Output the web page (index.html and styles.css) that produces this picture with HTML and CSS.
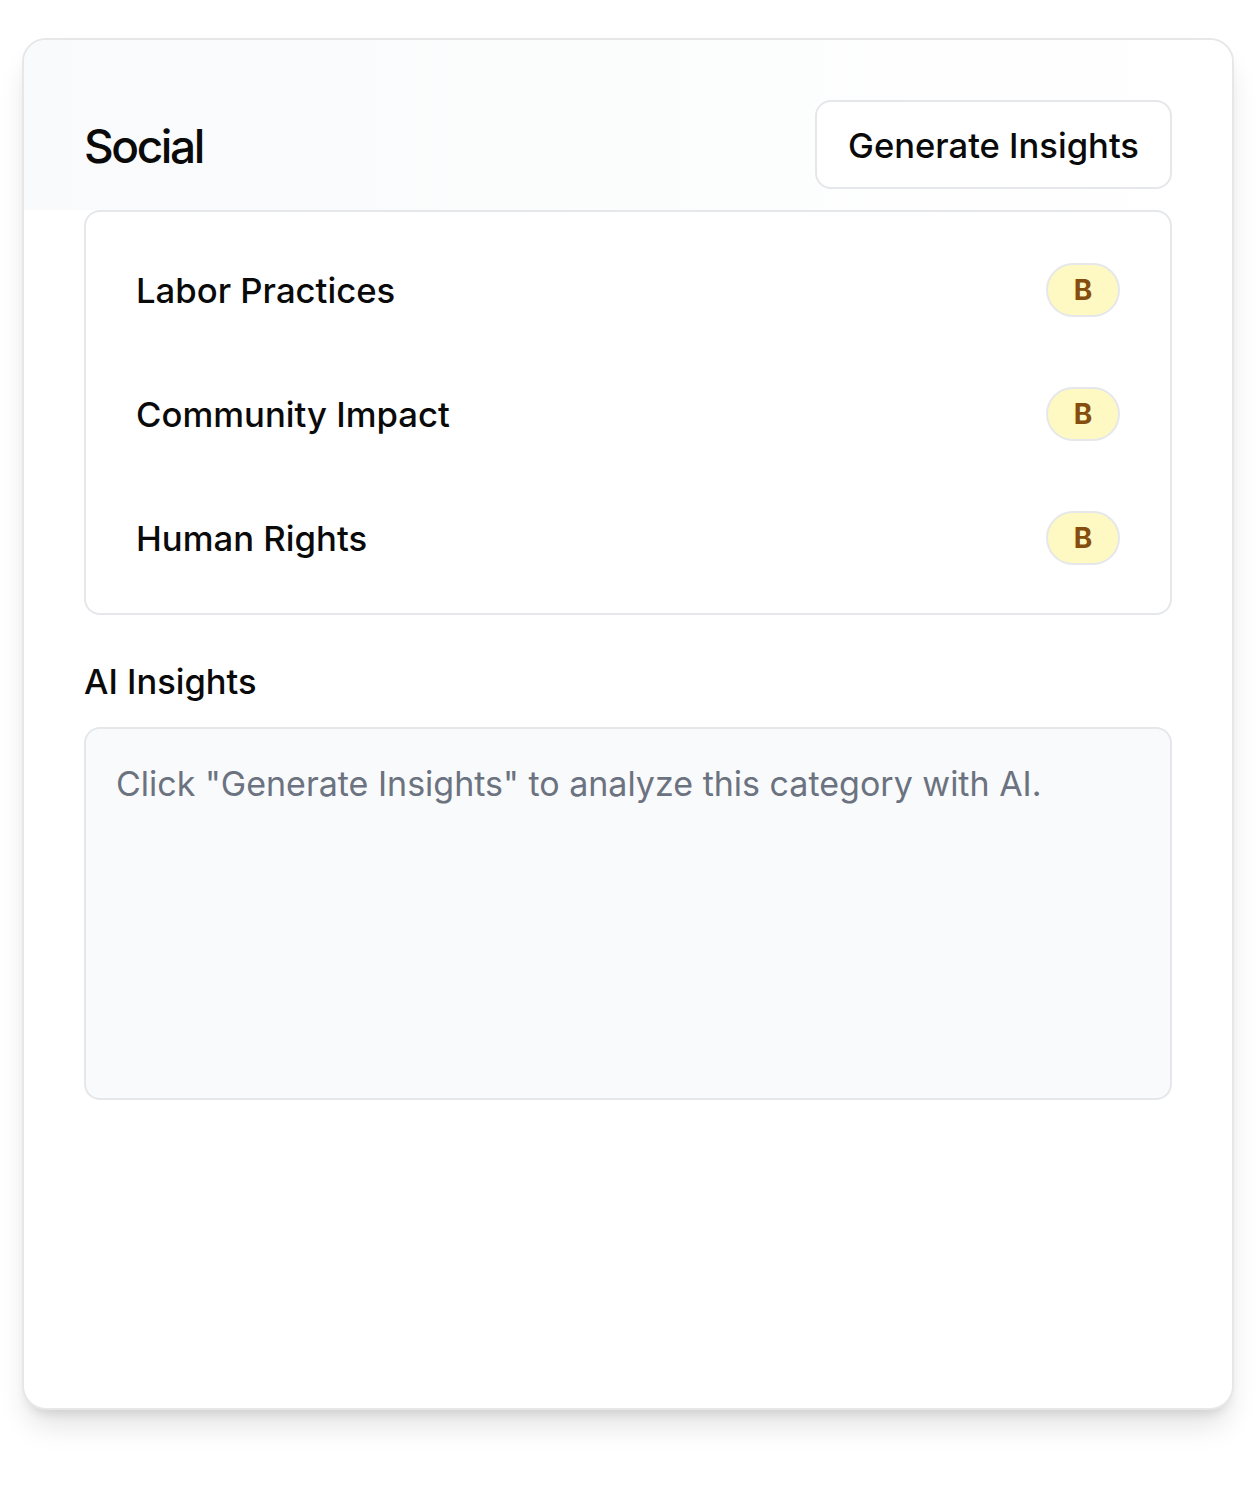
FILE: index.html
```html
<!DOCTYPE html>
<html lang="en">
<head>
<meta charset="utf-8">
<title>Social</title>
<link rel="stylesheet" href="styles.css">
</head>
<body>
<div class="card">
  <div class="card-header">
    <h2 class="card-title">Social</h2>
    <button class="btn">Generate Insights</button>
  </div>
  <div class="metrics">
    <div class="metric-row"><span class="metric-name">Labor Practices</span><span class="badge">B</span></div>
    <div class="metric-row"><span class="metric-name">Community Impact</span><span class="badge">B</span></div>
    <div class="metric-row"><span class="metric-name">Human Rights</span><span class="badge">B</span></div>
  </div>
  <div class="insights">
    <h3 class="insights-title">AI Insights</h3>
    <div class="insights-box">
      <p class="insights-text">Click "Generate Insights" to analyze this category with AI.</p>
    </div>
  </div>
</div>
</body>
</html>
```
FILE: styles.css
```css
* { box-sizing: border-box; }
html, body { margin: 0; padding: 0; background: #ffffff; }
body {
  font-family: Inter, "Noto Sans", "Liberation Sans", sans-serif;
  color: #0a0a0a;
  padding: 38px 26px 0 22px;
  min-height: 1494px;
}
.card {
  width: 1212px;
  height: 1372px;
  border: 2px solid #e7e7e7;
  border-radius: 24px;
  background: #ffffff;
  box-shadow: 0 20px 30px -6px rgba(0,0,0,0.12), 0 8px 12px -6px rgba(0,0,0,0.12);
  overflow: hidden;
}
.card-header {
  height: 170px;
  padding: 60px 60px 21px;
  display: flex;
  align-items: center;
  justify-content: space-between;
  background: linear-gradient(to right, #f9fafb, #ffffff);
}
.card-title {
  margin: 0;
  font-size: 46px;
  font-weight: 500;
  letter-spacing: -2.4px;
  line-height: 1;
  padding-top: 2px;
}
.btn {
  height: 89px;
  padding: 0 31px;
  border: 2px solid #e5e7eb;
  border-radius: 16px;
  background: #ffffff;
  font-family: inherit;
  font-size: 34.6px;
  font-weight: 500;
  color: #0a0a0a;
}
.metrics {
  margin: 0 60px;
  border: 2px solid #e5e7eb;
  border-radius: 16px;
  padding: 16px 50px;
  height: 405px;
}
.metric-row {
  height: 124px;
  display: flex;
  align-items: center;
  justify-content: space-between;
}
.metric-name {
  font-size: 34.7px;
  font-weight: 500;
}
.badge {
  width: 74px;
  height: 54px;
  border: 2px solid #e5e7eb;
  border-radius: 999px;
  background: #fef9c3;
  color: #854d0e;
  font-size: 28px;
  font-weight: 700;
  display: flex;
  align-items: center;
  justify-content: center;
}
.insights {
  margin: 0 60px;
  padding-top: 43px;
}
.insights-title {
  margin: 0 0 21px;
  font-size: 34.5px;
  font-weight: 500;
  line-height: 48px;
}
.insights-box {
  height: 373px;
  border: 2px solid #e5e7eb;
  border-radius: 16px;
  background: #f9fafb;
  padding: 32px 30px;
}
.insights-text {
  margin: 0;
  font-size: 34px;
  line-height: 46px;
  color: #6b7280;
}
```
